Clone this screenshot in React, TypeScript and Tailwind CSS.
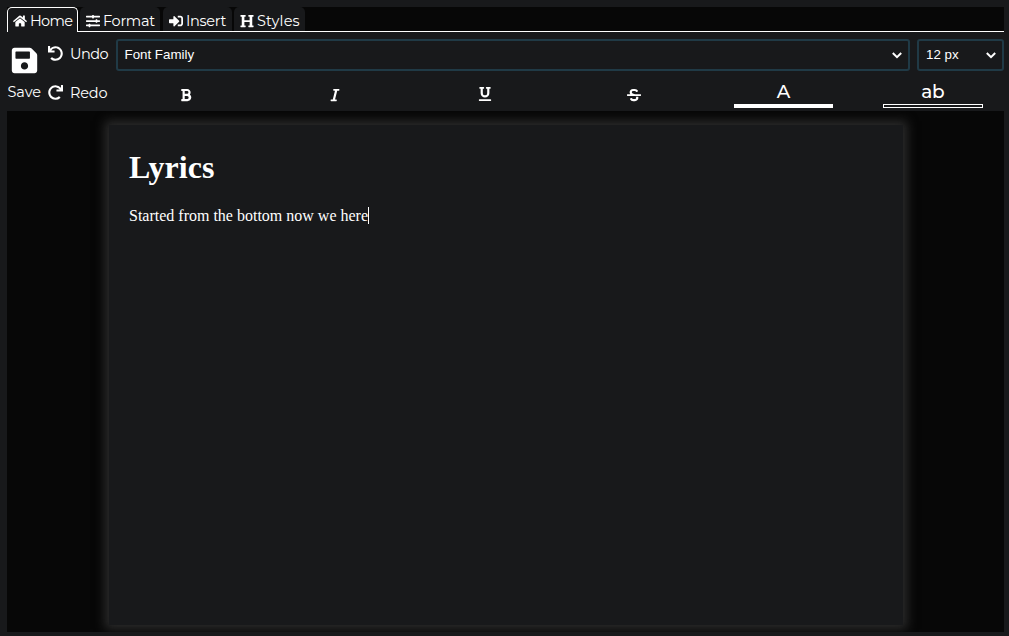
import React from "react";
import { FaHome, FaSlidersH, FaSignInAlt, FaHeading, FaSave, FaUndo, FaRedo, FaBold, FaItalic, FaUnderline, FaStrikethrough } from "react-icons/fa";

const ui = "font-['Montserrat','Inter',sans-serif]";

function Chevron() {
  return (
    <svg width="10" height="7" viewBox="0 0 10 7" fill="none" stroke="#fff" strokeWidth="2">
      <path d="M.8 1 5 5.2 9.2 1" />
    </svg>
  );
}

function Tab({ icon, label, className }: { icon: React.ReactNode; label: string; className: string }) {
  return (
    <button className={`flex items-center whitespace-nowrap rounded-t-[5px] text-[14.5px] ${className}`}>
      {icon}
      <span className="leading-[18px]">{label}</span>
    </button>
  );
}

function Select({ value, className }: { value: string; className: string }) {
  return (
    <button className={`flex h-8 shrink-0 items-center justify-between rounded-[3px] border-2 border-[#203a46] font-['Liberation_Sans',sans-serif] text-[13.333px] ${className}`}>
      <span>{value}</span>
      <Chevron />
    </button>
  );
}

export default function App() {
  return (
    <div className="h-[636px] w-[1009px] overflow-hidden bg-[#18191b] pt-[7px] pr-[5px] pb-1 pl-[7px] text-white">
      <div className={`flex h-[625px] flex-col bg-[#070707] ${ui}`}>
        <nav className="flex h-[25px] shrink-0 border-b border-white">
          <Tab className="mr-[2px] h-[25px] w-[71px] border border-b-0 border-white bg-[#18191b] pl-[5px] pt-[1px] tracking-[-0.7px]" icon={<FaHome size={14} className="mr-[3px] shrink-0" />} label="Home" />
          <Tab className="mr-[3px] h-6 w-[80px] bg-[#18191b] pl-[6px] pt-[3px] tracking-[-0.3px]" icon={<FaSlidersH size={14} className="mr-[3px] shrink-0" />} label="Format" />
          <Tab className="mr-[2px] h-6 w-[69px] bg-[#18191b] pl-[6px] pt-[3px] tracking-[-0.3px]" icon={<FaSignInAlt size={14} className="mr-[3px] shrink-0" />} label="Insert" />
          <Tab className="h-6 w-[71px] bg-[#18191b] pl-[6px] pt-[3px] tracking-[0.15px]" icon={<FaHeading size={14} className="mr-[3px] shrink-0" />} label="Styles" />
        </nav>

        <section className="flex h-[79px] shrink-0 bg-[#18191b] text-[14.5px]">
          <button className="flex w-[34.5px] shrink-0 flex-col items-center pt-[14px]">
            <FaSave size={29} className="shrink-0" />
            <span className="mt-[8px] leading-[18px]">Save</span>
          </button>
          <div className="flex w-[67.5px] shrink-0 flex-col pl-[6.5px] pt-[13px]">
            <button className="flex h-[18px] items-center">
              <FaUndo size={15} className="mr-[7px] mb-[2px] shrink-0" />
              <span className="leading-[18px] tracking-[-0.5px]">Undo</span>
            </button>
            <button className="mt-[21px] flex h-[18px] items-center">
              <FaRedo size={15} className="mr-[7px] mb-px shrink-0" />
              <span className="leading-[18px] tracking-[-0.2px]">Redo</span>
            </button>
          </div>
          <div className="flex w-[895px] shrink-0 flex-col pl-[7px] pt-[7px]">
            <div className="flex gap-[7px]">
              <Select value="Font Family" className="w-[794px] pl-[6.5px] pr-[6px]" />
              <Select value="12 px" className="w-[87px] pl-[7px] pr-[6px]" />
            </div>
            <div className="-ml-[5px] grid h-[40px] w-[896px] grid-cols-6">
              <button className="flex items-center justify-center pl-px pt-[7px]"><FaBold size={14} /></button>
              <button className="flex items-center justify-center pl-px pt-[7px]"><FaItalic size={14} /></button>
              <button className="flex items-center justify-center pl-px pt-[6px]"><FaUnderline size={14} /></button>
              <button className="flex items-center justify-center pl-px pt-[7px]"><FaStrikethrough size={14} /></button>
              <button className="flex flex-col items-center pl-px pt-[8px]">
                <span className="text-[18.5px] font-medium leading-[25px]">A</span>
                <span className="h-1 w-[99px] bg-white" />
              </button>
              <button className="flex flex-col items-center pl-px pt-[8px]">
                <span className="text-[18.5px] font-medium leading-[25px] tracking-[-0.3px]">ab</span>
                <span className="h-1 w-[100px] border border-white" />
              </button>
            </div>
          </div>
        </section>

        <main className="flex-1 overflow-hidden pl-[102px] pt-[14px]">
          <article className="h-[500px] w-[794px] bg-[#18191b] px-5 pt-[24px] font-['Liberation_Serif',serif] shadow-[0_0_10px_4px_#2c2c2c]">
            <h1 className="text-[32px] font-bold leading-[37px]">Lyrics</h1>
            <p className="mt-[21px] flex text-base leading-[18px]">
              Started from the bottom now we here
              <span className="h-[17px] w-px bg-white" />
            </p>
          </article>
        </main>
      </div>
    </div>
  );
}
